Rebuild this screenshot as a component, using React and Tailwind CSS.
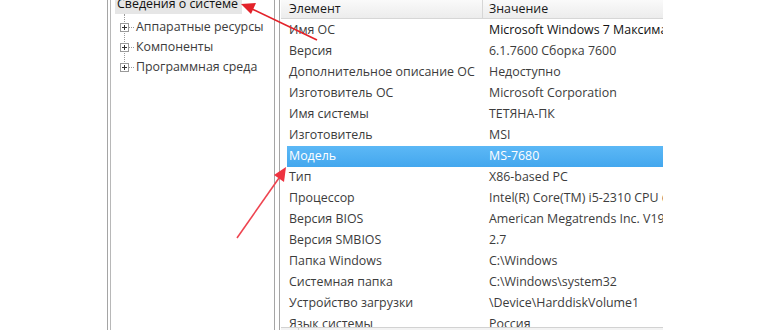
const rows = [
  ['Имя ОС', 'Microsoft Windows 7 Максимальная'],
  ['Версия', '6.1.7600 Сборка 7600'],
  ['Дополнительное описание ОС', 'Недоступно'],
  ['Изготовитель ОС', 'Microsoft Corporation'],
  ['Имя системы', 'ТЕТЯНА-ПК'],
  ['Изготовитель', 'MSI'],
  ['Модель', 'MS-7680'],
  ['Тип', 'X86-based PC'],
  ['Процессор', 'Intel(R) Core(TM) i5-2310 CPU @ 2.90GHz'],
  ['Версия BIOS', 'American Megatrends Inc. V19.6'],
  ['Версия SMBIOS', '2.7'],
  ['Папка Windows', 'C:\\Windows'],
  ['Системная папка', 'C:\\Windows\\system32'],
  ['Устройство загрузки', '\\Device\\HarddiskVolume1'],
  ['Язык системы', 'Россия'],
];

const treeItems = ['Аппаратные ресурсы', 'Компоненты', 'Программная среда'];

const PlusBox = () => (
  <span className="relative w-[9px] h-[9px] border border-[#9a9a9a] bg-white flex items-center justify-center shrink-0">
    <span className="absolute w-[5px] h-px bg-[#333]" />
    <span className="absolute w-px h-[5px] bg-[#333]" />
  </span>
);

const App = () => {
  return (
    <div
      className="relative w-[770px] h-[330px] bg-white overflow-hidden flex text-[12.4px] text-[#3c3c3c]"
      style={{ fontFamily: '"Open Sans", "Noto Sans", sans-serif' }}
    >
      {/* blank margin */}
      <div className="w-[107px] shrink-0" />

      {/* Tree pane */}
      <div className="w-[168px] shrink-0 border-x border-[#a5a5a5] pl-[2px]">
        <div className="h-full border-l border-[#b8b8b8] pl-[4px]">
          <div className="h-[14px] w-[127px] bg-[#e6e6e6] flex items-center pl-[2px]">
            <span className="text-[#111] font-medium leading-none -mt-[5px] whitespace-nowrap">Сведения о системе</span>
          </div>
          <div className="relative pl-[5px] pt-[3px]">
            {/* dotted trunk */}
            <div className="absolute left-[9px] top-0 h-[52px] border-l border-dotted border-[#9a9a9a]" />
            {treeItems.map((item) => (
              <div key={item} className="h-[20px] flex items-center">
                <PlusBox />
                <span className="w-[5px] border-t border-dotted border-[#9a9a9a] mr-[2px]" />
                <span className="whitespace-nowrap">{item}</span>
              </div>
            ))}
          </div>
        </div>
      </div>

      <div className="w-[4px] shrink-0" />

      {/* Details pane */}
      <div className="flex-1 border-l border-[#a5a5a5] pl-[1px]">
        <div className="w-[382px] h-full flex flex-col overflow-hidden">
          {/* header */}
          <div className="h-[19px] shrink-0 flex bg-gradient-to-b from-[#fafafa] to-[#ececec] border-b border-[#d6d6d6]">
            <div className="w-[202px] border-r border-[#d6d6d6] pl-[8px] flex items-center text-[#1a1a1a] whitespace-nowrap">
              Элемент
            </div>
            <div className="flex-1 pl-[6px] flex items-center text-[#1a1a1a] whitespace-nowrap">Значение</div>
          </div>
          <div className="h-[308px] shrink-0 overflow-hidden pt-[1px]">
            {rows.map(([k, v], i) => {
              const sel = k === 'Модель';
              return (
                <div
                  key={k}
                  className={`h-[21px] flex items-center ${sel ? 'bg-gradient-to-b from-[#5cb8f6] to-[#43a7ee] text-white ml-[6px]' : ''}`}
                >
                  <div className={`${sel ? 'w-[196px] pl-[2px]' : 'w-[202px] pl-[8px]'} whitespace-nowrap overflow-hidden`}>{k}</div>
                  <div className={`flex-1 pl-[6px] whitespace-nowrap overflow-hidden ${i === 0 ? 'text-[#111]' : ''}`}>{v}</div>
                </div>
              );
            })}
          </div>
          {/* horizontal scrollbar edge */}
          <div className="flex-1 flex border-t border-[#d2d2d2] bg-[#f3f3f3]">
            <div className="w-[18px] border-r border-[#d2d2d2]" />
          </div>
        </div>
      </div>

      {/* red arrows */}
      <svg className="absolute inset-0 pointer-events-none" width="770" height="330">
        <line x1="317" y1="40" x2="252" y2="9" stroke="#e3222a" strokeWidth="1.6" />
        <polygon points="241,4 256,3 251,14" fill="#e3222a" />
        <line x1="237" y1="238" x2="279" y2="178" stroke="#ee4450" strokeWidth="1.6" />
        <polygon points="286,167 284,182 274,175" fill="#ee3340" />
      </svg>
    </div>
  );
};

export default App;
